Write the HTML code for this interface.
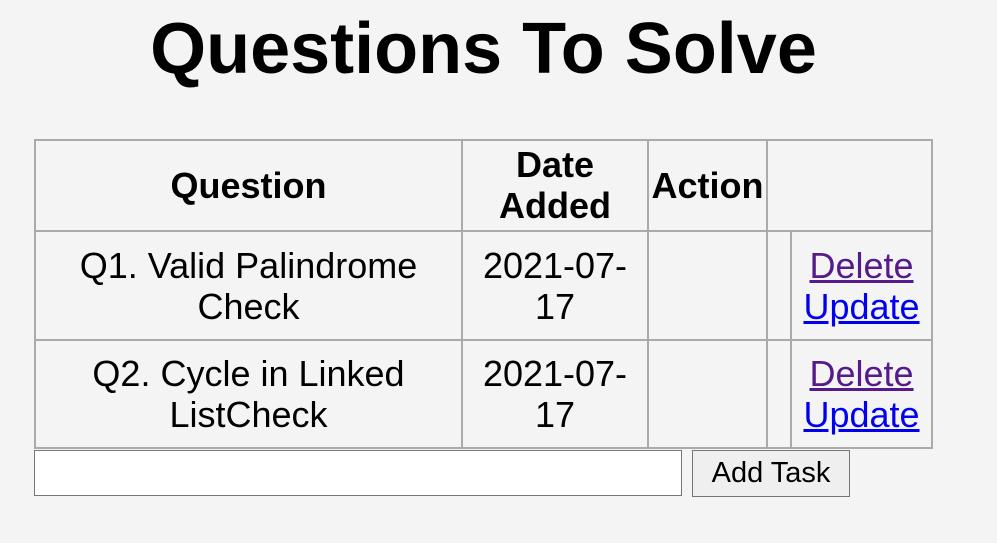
<!DOCTYPE html>
<html><head><style>
body{margin:0;background:#f4f4f4;width:997px;height:543px;overflow:hidden;font-family:"Liberation Sans",Arial,sans-serif;position:relative}
.l{position:absolute;background:#aaa}
.t{position:absolute;text-align:center;font-size:36px;line-height:41px;color:#000}
.b{font-weight:bold}
h1{position:absolute;margin:0;left:0;width:967px;text-align:center;top:8px;font-size:72px;line-height:82px;font-weight:bold}
a{text-decoration:underline}
.v{color:#551a8b}.u{color:#0000ee}
</style></head><body>
<h1>Questions To Solve</h1>
<div class="l" style="left:34px;top:139px;width:899px;height:2px"></div>
<div class="l" style="left:34px;top:230px;width:899px;height:2px"></div>
<div class="l" style="left:34px;top:339px;width:899px;height:2px"></div>
<div class="l" style="left:34px;top:447px;width:899px;height:2px"></div>
<div class="l" style="left:34px;top:139px;width:2px;height:310px"></div>
<div class="l" style="left:461px;top:139px;width:2px;height:310px"></div>
<div class="l" style="left:647px;top:139px;width:2px;height:310px"></div>
<div class="l" style="left:766px;top:139px;width:2px;height:310px"></div>
<div class="l" style="left:790px;top:230px;width:2px;height:219px"></div>
<div class="l" style="left:931px;top:139px;width:2px;height:310px"></div>

<div class="t b" style="left:36px;width:425px;top:165px">Question</div>
<div class="t b" style="left:463px;width:184px;top:144px">Date<br>Added</div>
<div class="t b" style="left:649px;width:117px;top:165px">Action</div>

<div class="t" style="left:36px;width:425px;top:245px">Q1. Valid Palindrome<br>Check</div>
<div class="t" style="left:463px;width:184px;top:245px">2021-07-<br>17</div>
<div class="t" style="left:792px;width:139px;top:245px"><a class="v">Delete</a><br><a class="u">Update</a></div>

<div class="t" style="left:36px;width:425px;top:353px">Q2. Cycle in Linked<br>ListCheck</div>
<div class="t" style="left:463px;width:184px;top:353px">2021-07-<br>17</div>
<div class="t" style="left:792px;width:139px;top:353px"><a class="v">Delete</a><br><a class="u">Update</a></div>

<div style="position:absolute;left:34px;top:450px;width:646px;height:44px;background:#fff;border:1px solid #767676"></div>
<div style="position:absolute;left:692px;top:450px;width:156px;height:45px;background:#efefef;border:1px solid #767676;font-size:29px;line-height:45px;text-align:center">Add Task</div>
</body></html>
